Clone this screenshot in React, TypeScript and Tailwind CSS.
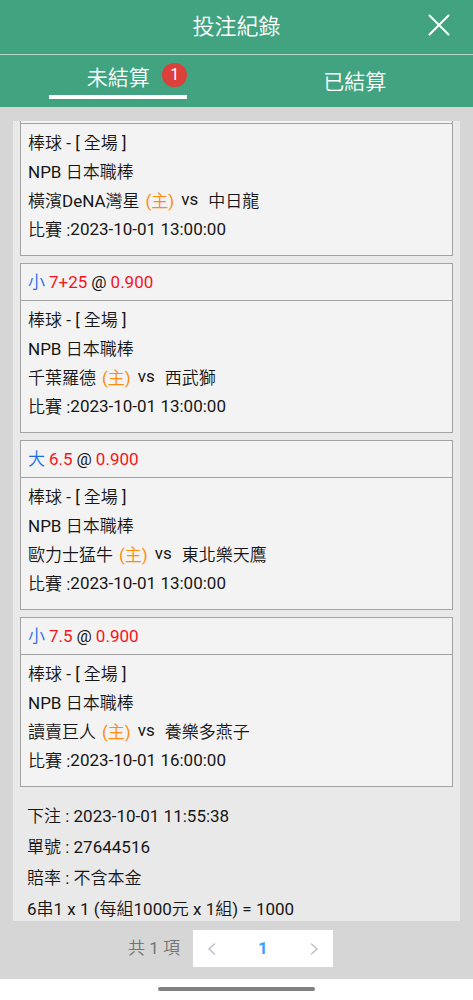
import React from "react";

type Bet = {
  pick?: string;
  line?: string;
  odds?: string;
  home: string;
  away: string;
  time: string;
};

const bets: Bet[] = [
  { home: "橫濱DeNA灣星", away: "中日龍", time: "2023-10-01 13:00:00" },
  { pick: "小", line: "7+25", odds: "0.900", home: "千葉羅德", away: "西武獅", time: "2023-10-01 13:00:00" },
  { pick: "大", line: "6.5", odds: "0.900", home: "歐力士猛牛", away: "東北樂天鷹", time: "2023-10-01 13:00:00" },
  { pick: "小", line: "7.5", odds: "0.900", home: "讀賣巨人", away: "養樂多燕子", time: "2023-10-01 16:00:00" },
];

const summary = [
  "下注 : 2023-10-01 11:55:38",
  "單號 : 27644516",
  "賠率 : 不含本金",
  "6串1 x 1 (每組1000元 x 1組) = 1000",
];

function BetCard({ bet }: { bet: Bet }) {
  return (
    <article
      className={
        bet.pick
          ? "border border-[#a3a3a3] bg-[#f3f3f3]"
          : "border-x border-b border-[#a3a3a3] bg-[#f3f3f3]"
      }
    >
      {bet.pick ? (
        <h2 className="flex h-[37px] items-center border-b border-[#a3a3a3] px-[7px] pt-[2px]">
          <span className="text-[#1a6bf0]">{bet.pick}</span>
          <span className="ml-1 text-[#f5141b]">{bet.line}</span>
          <span className="mx-1">@</span>
          <span className="text-[#f5141b]">{bet.odds}</span>
        </h2>
      ) : (
        <div className="h-[3px] border-b border-[#a3a3a3]" />
      )}
      <div className="px-[7px] pt-[5px] pb-[10px] leading-[29px]">
        <p>棒球 - [ 全場 ]</p>
        <p>NPB 日本職棒</p>
        <p className="flex h-[29px]">
          <span>{bet.home}</span>
          <span className="ml-[6px] text-[#fb8c0c]">(主)</span>
          <span className="mr-[10px] ml-[7px] leading-[25px]">vs</span>
          <span>{bet.away}</span>
        </p>
        <p className="flex h-[29px]">
          <span>比賽 :</span>
          <time className="leading-[26px]">{bet.time}</time>
        </p>
      </div>
    </article>
  );
}

export default function App() {
  return (
    <div className="flex h-screen flex-col bg-[#d6d6d6] font-['Roboto','Noto_Sans_CJK_TC_DemiLight','Noto_Sans_CJK_TC',sans-serif] text-[17px] text-[#161616]">
      <header className="shrink-0 bg-[#41a380] text-white">
        <div className="relative flex h-[55px] items-center justify-center border-b border-[#b4d8ca]">
          <h1 className="text-[22px] leading-8">投注紀錄</h1>
          <button type="button" aria-label="關閉" className="absolute top-[14px] right-[23px]">
            <svg width="22" height="22" viewBox="0 0 22 22" fill="none" stroke="currentColor" strokeWidth="2" strokeLinecap="round">
              <path d="M1.5 1.5 20.5 20.5M20.5 1.5 1.5 20.5" />
            </svg>
          </button>
        </div>
        <nav className="grid h-[52px] grid-cols-2 justify-items-center text-[21px]">
          <button type="button" className="relative mb-2 w-[138px] border-b-4 border-white pt-[6px] leading-8">
            未結算
            <span className="absolute top-2 right-0 flex h-6 w-[25px] items-center justify-center rounded-full bg-[#dc403a] text-base">
              1
            </span>
          </button>
          <button type="button" className="pt-[2px] leading-8">
            已結算
          </button>
        </nav>
      </header>

      <main className="mx-[13px] mt-[14px] flex min-h-0 flex-1 flex-col overflow-y-auto bg-[#e9e9e9] px-[7px] [scrollbar-width:none]">
        <div className="flex flex-col gap-[7px]">
          {bets.map((bet) => (
            <BetCard key={bet.home} bet={bet} />
          ))}
        </div>
        <div className="px-[7px] pt-[14px] leading-[31px]">
          {summary.map((text) => (
            <p key={text}>{text}</p>
          ))}
        </div>
      </main>

      <nav className="flex h-[58px] shrink-0 items-center justify-center gap-[13px] pr-[12px] pb-[3px]">
        <span className="text-[#737477]">共 1 項</span>
        <div className="flex h-[37px] w-[140px] items-center justify-between bg-white px-[13px]">
          <button type="button" aria-label="上一頁" className="text-[#bfc3ca]">
            <svg width="12" height="14" viewBox="0 0 12 14" fill="none" stroke="currentColor" strokeWidth="1.6">
              <path d="M9 1.5 3 7l6 5.5" />
            </svg>
          </button>
          <button type="button" className="font-bold text-[#409eff]">
            1
          </button>
          <button type="button" aria-label="下一頁" className="text-[#bfc3ca]">
            <svg width="12" height="14" viewBox="0 0 12 14" fill="none" stroke="currentColor" strokeWidth="1.6">
              <path d="M3 1.5 9 7l-6 5.5" />
            </svg>
          </button>
        </div>
      </nav>

      <footer className="flex h-[21px] shrink-0 justify-center bg-white pt-2">
        <div className="h-1 w-1/3 rounded-full bg-[#808080]" />
      </footer>
    </div>
  );
}
